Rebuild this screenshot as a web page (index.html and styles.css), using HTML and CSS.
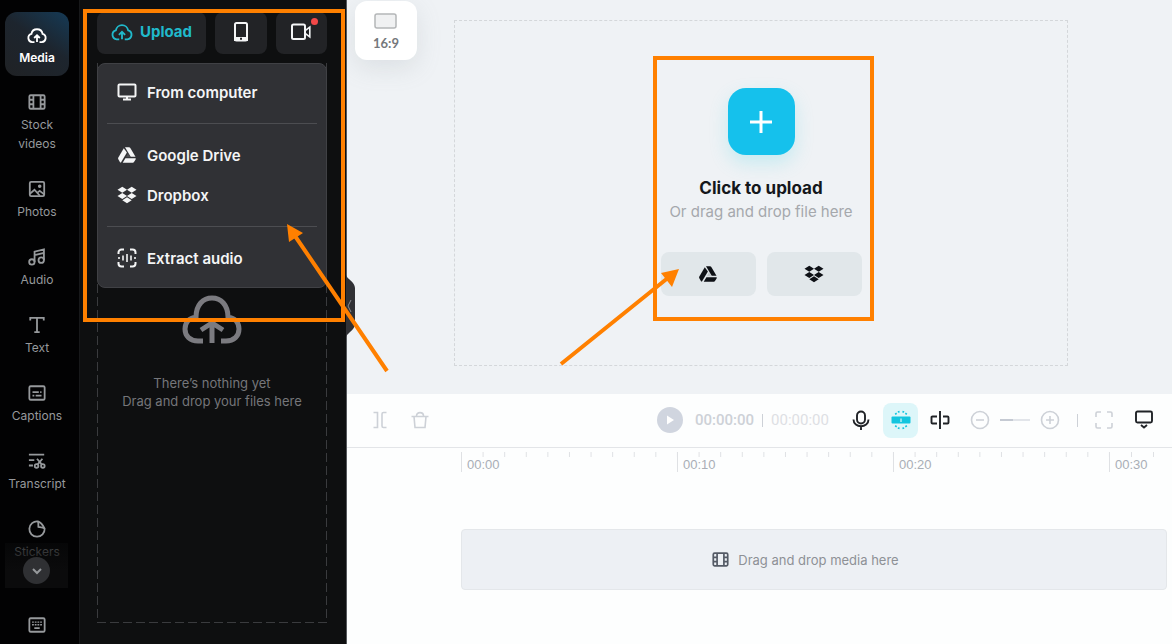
FILE: index.html
```html
<!DOCTYPE html>
<html lang="en">
<head>
<meta charset="utf-8">
<title>Video editor</title>
<link rel="stylesheet" href="styles.css">
</head>
<body>
<svg class="sprite" aria-hidden="true">
  <symbol id="cloud" viewBox="0 0 24 20"><path d="M9 18.5H6.200a5 5 0 0 1-.9-9.800 6.800 6.800 0 0 1 13.400 0 5 5 0 0 1-.9 9.800H15M12 18.500V11M8.600 13.600 12 10.400l3.400 3.200"/></symbol>
  <symbol id="film" viewBox="0 0 20 20"><rect x="1.500" y="2.500" width="17" height="15" rx="1.500"/><path d="M6 3v14M14 3v14M1.500 7.500H6M1.500 12.500H6M14 7.500h4.500M14 12.500h4.500"/></symbol>
  <symbol id="drive" viewBox="0 0 20 20"><path d="M6.800 3.200 1.200 12.800q-.3.600 0 1.200l1.800 3.200q.6.600 1.100 0L9.900 7.600z"/><path d="M8 2.200h4q.8 0 1.300.8l5.200 8.800h-4.800z"/><path d="M11 8.300l2.300 3.900h-4.500z" opacity=".15"/><path d="M8.400 13.200h10.200q.4.500 0 1.200l-1.600 2.700q-.4.700-1.200.7H5.700z"/></symbol>
  <symbol id="dropbox" viewBox="0 0 20 18"><path d="m5.300.8 4.700 3-4.700 3-4.800-3zM14.700.8l4.800 3-4.800 3-4.700-3zM5.300 6.900l4.700 3-4.700 3-4.800-3zM14.700 6.900l4.800 3-4.800 3-4.700-3zM10 11.300l4.700 3-4.700 3-4.700-3z"/></symbol>
</svg>
<div class="app">
  <nav class="rail" aria-label="Library">
    <button class="rail-item active"><svg class="icon"><use href="#cloud"/></svg><span>Media</span></button>
    <div class="rail-list">
      <button class="rail-item"><svg class="icon"><use href="#film"/></svg><span>Stock videos</span></button>
      <button class="rail-item"><svg class="icon" viewBox="0 0 20 20"><rect x="2" y="2" width="16" height="16" rx="1.500"/><circle class="solid" cx="13" cy="7" r="1"/><path d="m2 15.500 5.200-4.700 6 6.700M10.500 14l2.500-2 5 4"/></svg><span>Photos</span></button>
      <button class="rail-item"><svg class="icon" viewBox="0 0 20 20"><circle cx="4.300" cy="15.500" r="3"/><circle cx="14.700" cy="13.500" r="3"/><path d="M7.300 15.500V4l10.400-2.500v12M7.300 8l10.400-2.500"/></svg><span>Audio</span></button>
      <button class="rail-item"><svg class="icon" viewBox="0 0 20 20"><path d="M2.500 5V2h15v3M10 2v16M7 18h6"/></svg><span>Text</span></button>
      <button class="rail-item"><svg class="icon" viewBox="0 0 20 20"><rect x="1.500" y="2.500" width="17" height="15" rx="1.500"/><path d="M5 9h7M13.500 9H15M5 13h2M8.500 13H15"/></svg><span>Captions</span></button>
      <button class="rail-item"><svg class="icon" viewBox="0 0 20 20"><path d="M1 3h17M1 9h6M1 15h4.500M10 7.500l5.500 6.500M16 7.500 10.500 14"/><circle cx="9.500" cy="15.500" r="2"/><circle cx="16.500" cy="15.500" r="2"/></svg><span>Transcript</span></button>
      <button class="rail-item"><svg class="icon" viewBox="0 0 20 20"><path d="M11 1.600a8.500 8.500 0 1 0 7.500 8C16 4.500 14 2.500 11 1.600zM11 1.600c.8 2 .5 4 .5 6 2.500.5 5 .5 7 2"/></svg><span>Stickers</span></button>
      <div class="rail-fade"><button class="rail-more" aria-label="More"><svg viewBox="0 0 14 14"><path d="m3 5 4 4 4-4"/></svg></button></div>
    </div>
    <button class="rail-keys" aria-label="Keyboard shortcuts"><svg class="icon" viewBox="0 0 20 20"><rect x="1.500" y="2.500" width="17" height="15" rx="1.500"/><path d="M5.500 6v1.500M8.500 6v1.500M11.500 6v1.500M14.500 6v1.500M5.500 9v1.500M8.500 9v1.500M11.500 9v1.500M14.500 9v1.500M7 13.500h6"/></svg></button>
  </nav>

  <aside class="panel">
    <div class="sources">
      <button class="source upload"><svg class="cloud"><use href="#cloud"/></svg>Upload</button>
      <button class="source" aria-label="From phone"><svg class="icon" viewBox="0 0 20 20"><rect x="4" y="1" width="12" height="17.500" rx="1.500"/><path class="solid" d="M4 16h12v2H4z"/><path class="cut" d="M9 16.800h2"/></svg></button>
      <button class="source" aria-label="Record"><svg class="icon" viewBox="0 0 20 20"><rect x="1" y="2.500" width="13" height="14.500" rx="1.500"/><path class="lens" d="M14.500 8.300 18.800 5v10l-4.300-3.300"/></svg><i class="dot"></i></button>
    </div>
    <div class="menu">
      <button class="menu-item"><svg class="icon" viewBox="0 0 20 20"><rect x="1.500" y="2.500" width="17" height="12" rx="1"/><path d="M10 14.500V18M6 17.500h8"/></svg>From computer</button>
      <hr>
      <button class="menu-item"><svg class="icon fill"><use href="#drive"/></svg>Google Drive</button>
      <button class="menu-item"><svg class="icon fill"><use href="#dropbox"/></svg>Dropbox</button>
      <hr>
      <button class="menu-item"><svg class="icon" viewBox="0 0 20 20"><path d="M1.500 6V4.500a3 3 0 0 1 3-3H7M13 1.500h2.500a3 3 0 0 1 3 3V6M18.500 14v1.500a3 3 0 0 1-3 3H13M7 18.500H4.500a3 3 0 0 1-3-3V14"/><path class="wave" d="M2 9v2M6 7.500v5M10 6v8M14 7.500v5M18 9v2"/></svg>Extract audio</button>
    </div>
    <div class="dropzone">
      <svg class="empty" viewBox="0 0 60 50"><path d="M21 46h-5C8 46 3 41 3 34c0-6 4-11 11-12C14 10 21 3 30 3s16 7 16 19c7 1 11 6 11 12 0 7-5 12-13 12h-5M30 48V28M19 35l11-7 11 7"/></svg>
      <p>There’s nothing yet<br>Drag and drop your files here</p>
    </div>
    <button class="collapse" aria-label="Collapse panel"><svg viewBox="0 0 10 62"><path class="tab" d="M0 0c1 4 9 7 9 13v36c0 6-8 9-9 13z"/><path class="chev" d="M5 25 2 31l3 6"/></svg></button>
  </aside>

  <main class="main">
    <section class="preview">
      <button class="ratio"><svg viewBox="0 0 24 16"><rect x="1" y="1" width="21" height="14" rx="2"/></svg>16:9</button>
      <div class="stage">
        <button class="add" aria-label="Add media"><svg viewBox="0 0 24 24"><path d="M12 1v22M1 12h22"/></svg></button>
        <h1>Click to upload</h1>
        <p>Or drag and drop file here</p>
        <div class="clouds">
          <button class="service" aria-label="Google Drive"><svg class="icon fill"><use href="#drive"/></svg></button>
          <button class="service" aria-label="Dropbox"><svg class="icon fill"><use href="#dropbox"/></svg></button>
        </div>
      </div>
    </section>

    <section class="timeline">
      <div class="toolbar">
        <div class="edit">
          <button class="tool" aria-label="Split"><svg class="icon" viewBox="0 0 20 20"><path d="M3.500 2.500h4v15h-4M16.500 2.500h-3q-1.500 0-1.500 1.500v12q0 1.500 1.500 1.500h3"/></svg></button>
          <button class="tool" aria-label="Delete"><svg class="icon" viewBox="0 0 20 20"><path d="M1.500 6.500h17M4 6.500l1 11h10l1-11M6.500 6c0-4.500 7-4.500 7 0"/></svg></button>
        </div>
        <button class="play" aria-label="Play"><svg viewBox="0 0 26 26"><path d="M10 8.500v9l7-4.500z"/></svg></button>
        <div class="time"><span>00:00:00</span><i></i><span class="total">00:00:00</span></div>
        <button class="tool dark" aria-label="Record voice"><svg class="icon" viewBox="0 0 20 20"><rect x="6" y="1.500" width="8" height="12" rx="4"/><path d="M2.500 9.500c0 9 15 9 15 0M10 16.500V20"/></svg></button>
        <button class="tool snap" aria-label="Snapping"><svg class="icon" viewBox="0 0 20 20"><rect class="block" x="0.500" y="6.500" width="19" height="7" rx="1"/><path class="mark" d="M10 8.500v3.500"/><path class="rays" d="m4.500 3 .8 1.500M7.500 1l.4 1.600M12.500 1l-.4 1.600M15.500 3l-.8 1.500M4.500 17l.8-1.500M7.500 19l.4-1.600M12.500 19l-.4-1.600M15.500 17l-.8-1.500"/></svg></button>
        <button class="tool dark" aria-label="Preview axis"><svg class="icon" viewBox="0 0 20 20"><path d="M7 6.500H2.500q-1 0-1 1v5q0 1 1 1H7M13 6.500h4.500q1 0 1 1v5q0 1-1 1H13M10 1v18"/></svg></button>
        <div class="zoom">
          <button class="tool" aria-label="Zoom out"><svg class="icon" viewBox="0 0 20 20"><circle cx="10" cy="10" r="8.500"/><path d="M6 10h8"/></svg></button>
          <input type="range" value="43" aria-label="Zoom">
          <button class="tool" aria-label="Zoom in"><svg class="icon" viewBox="0 0 20 20"><circle cx="10" cy="10" r="8.500"/><path d="M6 10h8M10 6v8"/></svg></button>
        </div>
        <i class="rule"></i>
        <button class="tool" aria-label="Fit"><svg class="icon" viewBox="0 0 20 20"><path d="M2 7V3.500Q2 2 3.500 2H7M13 2h3.500Q18 2 18 3.500V7M18 13v3.500q0 1.500-1.500 1.500H13M7 18H3.500Q2 18 2 16.500V13"/></svg></button>
        <button class="tool dark" aria-label="Display"><svg class="icon" viewBox="0 0 20 20"><rect x="2" y="1.500" width="16" height="11" rx="1.500"/><path d="m7 15 3 2.500 3-2.500"/></svg></button>
      </div>
      <div class="ruler"><span>00:00</span><span>00:10</span><span>00:20</span><span>00:30</span></div>
      <div class="track"><svg class="icon"><use href="#film"/></svg>Drag and drop media here</div>
    </section>
  </main>
</div>

<svg class="notes" viewBox="0 0 1172 644" aria-hidden="true">
  <rect x="85" y="11" width="258" height="309"/>
  <rect x="655" y="58" width="217" height="261"/>
  <path d="M387 371 293 233M561 364l108-87"/>
  <path class="head" d="m287 224 16 9-14 9zM679 269l-18 4 11 14z"/>
</svg>
</body>
</html>
```
FILE: styles.css
```css
* { box-sizing: border-box; }
body { margin: 0; font-family: Inter, "Open Sans", sans-serif; }
button { font: inherit; color: inherit; border: 0; padding: 0; background: none; }
h1, p { margin: 0; }
svg { fill: none; stroke: currentColor; stroke-width: 2; display: block; flex: none; }
.sprite { position: absolute; width: 0; height: 0; }
.icon { width: 20px; height: 20px; }
.solid { fill: currentColor; }
.fill { fill: currentColor; stroke: none; }

.app { display: grid; grid-template-columns: 80px 267px 1fr; min-height: 100vh; }

/* Navigation rail */
.rail { display: flex; flex-direction: column; padding: 12px 11px 0 5px; background: #020203; color: #96999c; border-right: 1px solid #17181a; }
.rail-item { display: flex; flex-direction: column; align-items: center; gap: 3px; width: 64px; min-height: 64px; padding: 13px 0 9px; font-size: 12px; line-height: 19px; border-radius: 12px; }
.rail-item .icon, .rail-keys .icon { stroke-width: 2; padding: 0 1px; }
.rail-item.active { margin-bottom: 3px; color: #fff; font-weight: 600; background: linear-gradient(215deg, #153a56, #1d252e 45%, #202225); }
.rail-item.active .icon { stroke-width: 2.2; padding: 0; }
.rail-list { position: relative; flex: 1 1 0; overflow: hidden; display: flex; flex-direction: column; gap: 4px; }
.rail-fade { position: absolute; left: 0; right: 0; bottom: 0; height: 45px; display: flex; align-items: flex-end; justify-content: center; padding-bottom: 4px; background: linear-gradient(#090a0b90, #0b0b0cd0 40%, #0b0b0c 60%); }
.rail-more { width: 27px; height: 27px; display: grid; place-items: center; border-radius: 50%; background: #2f3033; }
.rail-more svg { width: 14px; height: 14px; }
.rail-keys { height: 56px; display: flex; justify-content: center; align-items: center; padding-top: 18px; }

/* Upload panel */
.panel { position: relative; display: flex; flex-direction: column; padding: 12px 19px 21px 17px; background: #0e0f10; border-right: 1px solid #55585c; color: #f4f5f6; }
.sources { display: grid; grid-template-columns: 109px 1fr 1fr; gap: 9px; margin-bottom: 9px; }
.source { position: relative; height: 42px; display: flex; align-items: center; justify-content: center; gap: 7px; padding-bottom: 3px; border-radius: 8px; background: #222326; }
.upload { color: #20b9cb; font-size: 15px; font-weight: 700; }
.cloud { width: 22px; height: 19px; }
.cut { stroke: #222326; }
.lens { stroke-width: 1.6; }
.dot { position: absolute; top: 6px; right: 9px; width: 7px; height: 7px; border-radius: 50%; background: #f24848; }
.menu { position: absolute; z-index: 1; top: 63px; left: 17px; right: 19px; padding: 8px 9px 9px; border: 1px solid #404145; border-radius: 8px; background: #303135; }
.menu hr { margin: 11px 0; border: 0; border-top: 1px solid #4c4d51; }
.menu-item { display: flex; align-items: center; gap: 10px; width: 100%; height: 40px; padding-left: 10px; font-size: 15px; font-weight: 600; }
.wave { stroke-width: 1.6; }
.dropzone {
  --dash: #3a3b3e 0 9px, transparent 9px 13px;
  flex: 1; display: flex; flex-direction: column; align-items: center; gap: 28px; padding-top: 231px;
  background:
    repeating-linear-gradient(var(--dash)) left / 1px 100% no-repeat,
    repeating-linear-gradient(var(--dash)) right / 1px 100% no-repeat,
    repeating-linear-gradient(90deg, var(--dash)) bottom / 100% 1px no-repeat;
  color: #75767a; font-size: 13px; line-height: 18px; text-align: center;
}
.dropzone p { white-space: nowrap; }
.empty { width: 60px; height: 52px; stroke-width: 5; color: #7b7b80; }
.collapse { position: absolute; top: 275px; right: -10px; width: 10px; height: 62px; }
.collapse svg { width: 10px; height: 62px; }
.tab { fill: #303135; stroke: none; }
.chev { stroke: #8b8c90; stroke-width: 1; }

/* Preview */
.main { min-width: 0; display: flex; flex-direction: column; background: #fdfefe; }
.preview { flex: 1; display: flex; align-items: flex-start; padding: 1px 104px 28px 8px; background: #eff2f5; }
.ratio { width: 62px; height: 59px; margin-right: 37px; display: flex; flex-direction: column; align-items: center; justify-content: center; gap: 6px; padding-top: 2px; border-radius: 12px; background: #fff; box-shadow: 0 8px 24px #8a939c30; color: #75787c; font: 700 13px/16px Lato, sans-serif; }
.ratio svg { width: 24px; height: 16px; stroke: #b4b6b8; stroke-width: 1.5; fill: #f0f1f2; }
.stage { flex: 1; align-self: stretch; margin-top: 19px; padding-top: 67px; display: flex; flex-direction: column; align-items: center; border: 1px dashed #d4d7da; }
.add { width: 67px; height: 67px; display: grid; place-items: center; border-radius: 18px; background: #15c1ec; color: #fff; box-shadow: 0 8px 18px #4fd9e840; }
.add svg { width: 24px; height: 24px; stroke-width: 3; }
.stage h1 { margin-top: 21px; font-size: 17px; line-height: 24px; font-weight: 700; color: #14171b; }
.stage p { font-size: 15px; line-height: 24px; color: #a5a8ac; }
.clouds { display: flex; gap: 11px; margin-top: 28px; }
.service { width: 95px; height: 44px; display: grid; place-items: center; border-radius: 8px; background: #e1e7ea; color: #0e1116; }

/* Timeline */
.timeline { padding-bottom: 54px; }
.toolbar { height: 54px; display: flex; align-items: center; padding: 0 18px 1px 23px; border-bottom: 1px solid #e3e5e8; color: #cdd1d7; }
.edit { display: flex; gap: 20px; margin-right: auto; }
.tool { display: grid; place-items: center; }
.tool .icon { stroke-width: 1.6; }
.tool.dark { color: #202327; }
.tool.dark .icon { stroke-width: 1.9; }
.play svg { width: 26px; height: 26px; border-radius: 50%; background: #d0d5df; fill: #fff; stroke: none; }
.time { width: 168px; padding-left: 12px; display: flex; align-items: center; gap: 8px; font: 500 15px/20px Roboto, sans-serif; }
.time i, .rule { width: 1px; height: 13px; background: #cdd1d7; }
.time .total { color: #dde0e4; font-weight: 400; }
.snap { width: 35px; height: 35px; margin: 0 12px; border-radius: 8px; background: #ddf6f9; color: #12c5df; }
.block { fill: currentColor; stroke: none; }
.mark { stroke: #ddf6f9; stroke-width: 1.2; }
.rays { stroke-width: 1.8; }
.zoom { display: flex; align-items: center; gap: 10px; margin: 0 17px 0 20px; }
.zoom input { appearance: none; width: 30px; height: 2px; margin: 0; background: linear-gradient(90deg, #c5cad3 43%, #e2e5ea 43%); }
.zoom input::-webkit-slider-thumb { appearance: none; width: 1px; height: 2px; }
.rule { margin-right: 16px; }
.rule + .tool { margin-right: 20px; }
.ruler { display: flex; margin: 4px 0 57px 114px; overflow: hidden; }
.ruler span { flex: 0 0 216px; height: 20px; padding: 3px 0 0 5px; border-left: 1px solid #dfe1e4; font: 13px/20px "Liberation Sans", Arial, sans-serif; color: #a9aeb6; background: linear-gradient(90deg, #dfe1e4 1px, transparent 1px) 0 0 / 10% 5px repeat-x border-box; }
.ruler span:last-child { flex: 1 0 0; min-width: 0; background-size: 22px 5px; }
.track { height: 61px; margin: 0 5px 0 114px; display: flex; align-items: center; justify-content: center; gap: 9px; padding-right: 17px; border: 1px solid #e4e7ea; border-radius: 4px; background: #edf0f4; color: #8e9196; font-size: 13px; }
.track .icon { width: 17px; height: 17px; color: #555b66; }

/* Callouts drawn over the page */
.notes { position: absolute; z-index: 5; top: 0; left: 0; width: 1172px; height: 644px; pointer-events: none; stroke: #ff8000; stroke-width: 4; }
.notes .head { fill: #ff8000; stroke: none; }
```
